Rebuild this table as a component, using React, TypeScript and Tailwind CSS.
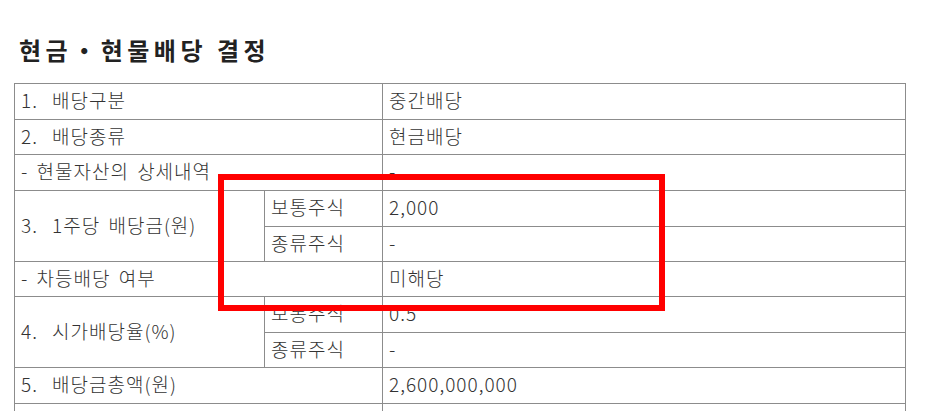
import React from "react";

const cell = "border border-[#8c8c8c] pl-[6px] pb-[3px] align-middle whitespace-nowrap";

function N({ n }: { n: string }) {
  return <span className="mr-[6px]">{n}</span>;
}

export default function App() {
  return (
    <div
      className="relative w-[942px] h-[411px] overflow-hidden bg-white text-[#333]"
      style={{ fontFamily: '"Noto Sans CJK KR", "Noto Sans", sans-serif' }}
    >
      <div className="pl-[19px] pt-[35px] h-[83px] text-[24px] leading-[30px] font-bold tracking-[4.5px] text-[#222]">
        현금・현물배당 결정
      </div>
      <table className="ml-[14px] w-[891px] border-collapse text-[19px] leading-[22px] tracking-[1px] [word-spacing:3px] font-light table-fixed">
        <colgroup>
          <col className="w-[250px]" />
          <col className="w-[118px]" />
          <col className="w-[523px]" />
        </colgroup>
        <tbody>
          <tr className="h-[36px]">
            <td className={cell} colSpan={2}><N n="1." /> 배당구분</td>
            <td className={cell}>중간배당</td>
          </tr>
          <tr className="h-[35px]">
            <td className={cell} colSpan={2}><N n="2." /> 배당종류</td>
            <td className={cell}>현금배당</td>
          </tr>
          <tr className="h-[36px]">
            <td className={cell} colSpan={2}>- 현물자산의 상세내역</td>
            <td className={cell}>-</td>
          </tr>
          <tr className="h-[36px]">
            <td className={cell} rowSpan={2}><N n="3." /> 1주당 배당금(원)</td>
            <td className={cell}>보통주식</td>
            <td className={cell}>2,000</td>
          </tr>
          <tr className="h-[35px]">
            <td className={cell}>종류주식</td>
            <td className={cell}>-</td>
          </tr>
          <tr className="h-[35px]">
            <td className={cell} colSpan={2}>- 차등배당 여부</td>
            <td className={cell}>미해당</td>
          </tr>
          <tr className="h-[36px]">
            <td className={cell} rowSpan={2}><N n="4." /> 시가배당율(%)</td>
            <td className={cell}>보통주식</td>
            <td className={cell}>0.5</td>
          </tr>
          <tr className="h-[35px]">
            <td className={cell}>종류주식</td>
            <td className={cell}>-</td>
          </tr>
          <tr className="h-[36px]">
            <td className={cell} colSpan={2}><N n="5." /> 배당금총액(원)</td>
            <td className={cell}>2,600,000,000</td>
          </tr>
          <tr className="h-[36px]">
            <td className={cell} colSpan={2}><N n="6." /> 배당기준일</td>
            <td className={cell}>2023-06-30</td>
          </tr>
        </tbody>
      </table>
      <div className="absolute left-[218px] top-[174px] w-[447px] h-[137px] border-[6px] border-[#ff0000]" />
    </div>
  );
}
